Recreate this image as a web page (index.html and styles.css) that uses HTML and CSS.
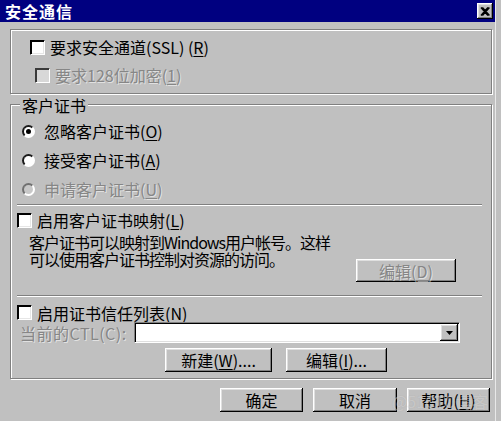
FILE: index.html
```html
<!DOCTYPE html>
<html lang="zh-CN">
<head>
<meta charset="utf-8">
<title>安全通信</title>
<link rel="stylesheet" href="styles.css">
</head>
<body>
<div class="window">
  <div class="titlebar">
    <span class="title">安全通信</span>
    <span class="close"><svg width="10" height="9" viewBox="0 0 10 9"><path d="M1 0.5L8 8.5M2.4 0.5L9.4 8.5M8 0.5L1 8.5M9.4 0.5L2.4 8.5" stroke="#000" stroke-width="1.5" fill="none"/></svg></span>
  </div>
  <div class="content">
    <div class="group group-ssl">
      <div class="row"><span class="check"></span><span>要求安全通道(SSL) (<u>R</u>)</span></div>
      <div class="row row-sub disabled"><span class="check"></span><span>要求128位加密(<u>1</u>)</span></div>
    </div>

    <div class="group group-cert">
      <div class="legend">客户证书</div>
      <div class="row radio-row first"><span class="radio checked"></span><span>忽略客户证书(<u>O</u>)</span></div>
      <div class="row radio-row"><span class="radio"></span><span>接受客户证书(<u>A</u>)</span></div>
      <div class="row radio-row disabled"><span class="radio"></span><span>申请客户证书(<u>U</u>)</span></div>

      <div class="sep sep-1"></div>

      <div class="row row-map"><span class="check"></span><span>启用客户证书映射(<u>L</u>)</span></div>
      <div class="map-block">
        <div class="desc">客户证书可以映射到Windows用户帐号。这样<br>可以使用客户证书控制对资源的访问。</div>
        <div class="btn btn-edit-d disabled">编辑(<u>D</u>)</div>
      </div>

      <div class="sep sep-2"></div>

      <div class="row row-ctl-check"><span class="check"></span><span>启用证书信任列表(<u>N</u>)</span></div>
      <div class="ctl-row">
        <span class="ctl-label disabled">当前的CTL(C):</span>
        <div class="combo">
          <span class="combo-btn"><svg width="7" height="4" viewBox="0 0 7 4"><path d="M0 0H7L3.5 4Z" fill="#000"/></svg></span>
        </div>
      </div>
      <div class="ctl-buttons">
        <div class="btn btn-new">新建(<u>W</u>)....</div>
        <div class="btn btn-edit-i">编辑(<u>I</u>)...</div>
      </div>
    </div>

    <div class="footer">
      <div class="btn btn-foot">确定</div>
      <div class="btn btn-foot btn-cancel">取消</div>
      <div class="btn btn-foot">帮助(<u>H</u>)</div>
    </div>
  </div>
  <span class="watermark">@51CTO博客</span>
</div>
</body>
</html>
```

FILE: styles.css
```css
* { box-sizing: border-box; }

html, body {
  margin: 0;
  padding: 0;
  background: #c0c0c0;
}

body {
  width: 501px;
  height: 421px;
  overflow: hidden;
  font-family: "Noto Sans CJK SC", "Noto Sans", sans-serif;
  font-size: 16px;
  color: #000;
}

.window {
  position: relative;
  width: 496px;
  height: 421px;
  border-right: 1px solid #e8e8e8;
}

.titlebar {
  height: 22px;
  background: #000080;
  display: flex;
  align-items: center;
  justify-content: space-between;
  padding: 0 2px 0 5px;
}

.title {
  color: #fff;
  font-weight: bold;
  font-size: 16px;
  letter-spacing: 1px;
  line-height: 22px;
}

.close {
  width: 16px;
  height: 16px;
  background: #c0c0c0;
  box-shadow: inset -1px -1px #000, inset 1px 1px #fff, inset -2px -2px #808080, inset 2px 2px #dfdfdf;
  display: flex;
  align-items: center;
  justify-content: center;
}

.content {
  padding: 7px 3px 0 10px;
}

.group {
  border: 1px solid #808080;
  box-shadow: inset 1px 1px #fff, 1px 1px #fff;
}

.row {
  display: flex;
  align-items: center;
  height: 22px;
  line-height: 22px;
  white-space: nowrap;
}

u { text-decoration: underline; text-underline-offset: 2px; }

.disabled {
  color: #868686;
  text-shadow: 1px 1px 0 rgba(255, 255, 255, 0.55);
}

.check {
  flex: none;
  width: 15px;
  height: 15px;
  margin-right: 5px;
  background: #fff;
  border: 1px solid;
  border-color: #000 #fff #fff #000;
  box-shadow: inset 1px 1px #000, inset -1px -1px #e6e6e6;
}

.disabled .check {
  background: #d8d8d8;
  border-color: #3a3a3a #fff #fff #3a3a3a;
  box-shadow: inset 1px 1px #3a3a3a;
}

.radio {
  flex: none;
  position: relative;
  width: 13px;
  height: 13px;
  margin: 0 9px 0 5px;
  border-radius: 50%;
  background: #fff;
  border: 2px solid;
  border-color: #1a1a1a #fff #fff #1a1a1a;
}

.radio.checked::after {
  content: "";
  position: absolute;
  left: 2px;
  top: 2px;
  width: 5px;
  height: 5px;
  border-radius: 50%;
  background: #000;
}

.disabled .radio {
  background: #c8c8c8;
  border-color: #707070 #fff #fff #707070;
}

/* SSL group */
.group-ssl {
  height: 65px;
  padding: 6px 0 0 19px;
}

.row-sub {
  margin-top: 6px;
  margin-left: 5px;
}

/* Client certificate group */
.group-cert {
  margin-top: 10px;
  padding: 0 9px 6px 6px;
}

.legend {
  width: fit-content;
  margin: -10px 0 0 3px;
  padding: 0 2px;
  background: #c0c0c0;
  line-height: 20px;
}

.radio-row { margin-top: 7px; }
.radio-row.first { margin-top: 5px; }

.sep {
  height: 2px;
  border-top: 1px solid #808080;
  border-bottom: 1px solid #fff;
}

.sep-1 { margin-top: 4px; }
.sep-2 { margin-top: 13px; }

.row-map { margin-top: 3px; }

.map-block {
  display: flex;
  align-items: flex-start;
  margin-top: 3px;
}

.desc {
  margin-left: 12px;
  line-height: 17px;
  letter-spacing: -1px;
  white-space: nowrap;
}

.btn {
  display: flex;
  align-items: center;
  justify-content: center;
  height: 24px;
  background: #c0c0c0;
  box-shadow: inset -1px -1px #000, inset 1px 1px #fff, inset -2px -2px #808080, inset 2px 2px #dfdfdf;
  white-space: nowrap;
  line-height: 20px;
}

.btn-edit-d {
  width: 100px;
  height: 23px;
  margin: 25px 26px 0 auto;
}

.row-ctl-check {
  margin-top: 6px;
  height: 19px;
}

.ctl-row {
  display: flex;
  align-items: center;
  height: 21px;
}

.ctl-label {
  width: 117px;
  padding-left: 3px;
  white-space: nowrap;
  letter-spacing: 0.5px;
}

.combo {
  display: flex;
  justify-content: flex-end;
  width: 326px;
  height: 21px;
  background: #fff;
  border: 1px solid;
  border-color: #808080 #fff #fff #808080;
  box-shadow: inset 1px 1px #000, inset -1px -1px #dfdfdf;
}

.combo-btn {
  display: flex;
  align-items: center;
  justify-content: center;
  width: 18px;
  height: 17px;
  margin: 1px;
  background: #c0c0c0;
  box-shadow: inset -1px -1px #000, inset 1px 1px #fff, inset -2px -2px #808080, inset 2px 2px #dfdfdf;
}

.ctl-buttons {
  display: flex;
  gap: 14px;
  margin-top: 5px;
  padding-left: 148px;
}

.btn-new { width: 107px; }
.btn-edit-i { width: 101px; }

.footer {
  display: flex;
  justify-content: flex-end;
  gap: 10px;
  margin-top: 9px;
  padding-right: 2px;
}

.btn-foot { width: 83px; }
.btn-cancel { width: 84px; }

.watermark {
  position: absolute;
  right: 7px;
  bottom: 8px;
  font-size: 16px;
  color: rgba(255, 255, 255, 0.35);
  text-shadow: 0 0 1px rgba(120, 120, 120, 0.35);
  pointer-events: none;
  white-space: nowrap;
}
```
